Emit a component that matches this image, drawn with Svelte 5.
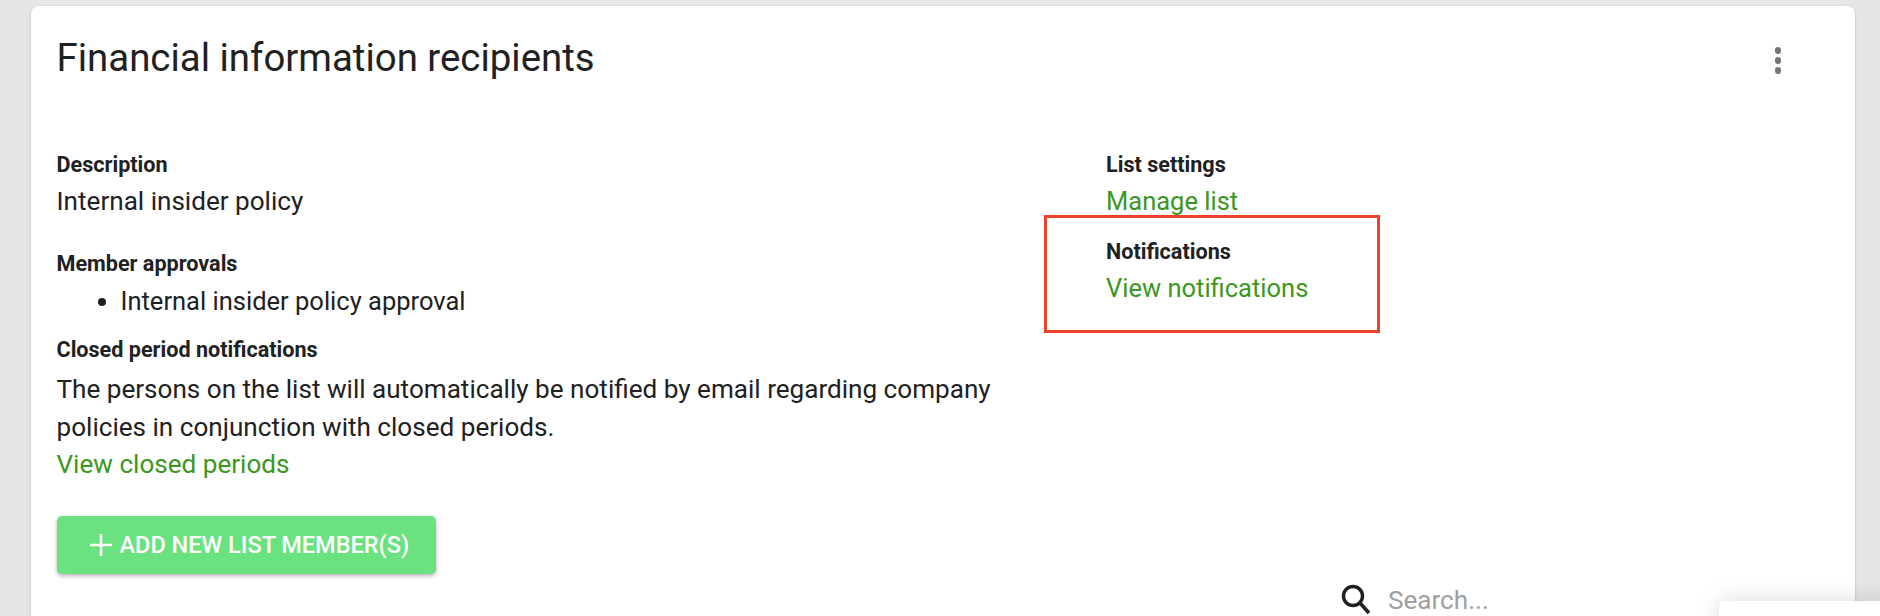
<script>
    const links = { manage: "Manage list", notifications: "View notifications", closed: "View closed periods" };
</script>

<div class="page">
    <div class="card">
        <div class="header">
            <h1>Financial information recipients</h1>
            <button class="more" aria-label="More">
                <span></span><span></span><span></span>
            </button>
        </div>

        <div class="columns">
            <div class="col left">
                <h4>Description</h4>
                <p>Internal insider policy</p>

                <h4 class="approvals">Member approvals</h4>
                <ul>
                    <li>Internal insider policy approval</li>
                </ul>

                <h4 class="closed">Closed period notifications</h4>
                <p>The persons on the list will automatically be notified by email regarding company policies in conjunction with closed periods.</p>
                <a href="#closed">{links.closed}</a>
            </div>

            <div class="col right">
                <h4>List settings</h4>
                <a href="#manage">{links.manage}</a>
                <h4 class="notif">Notifications</h4>
                <a href="#notifications">{links.notifications}</a>
            </div>
        </div>

        <div class="actions">
            <button class="add">
                <svg viewBox="0 0 24 24" width="24" height="24"><path d="M12 1v22M1 12h22" stroke="#fff" stroke-width="2.6" fill="none" /></svg>
                ADD NEW LIST MEMBER(S)
            </button>
            <div class="search">
                <svg viewBox="0 0 30 32" width="30" height="32"><circle cx="12" cy="12" r="9.5" stroke="#212121" stroke-width="3.4" fill="none" /><path d="M19 19l9 10" stroke="#212121" stroke-width="3.6" fill="none" /></svg>
                <span>Search...</span>
            </div>
        </div>
    </div>

    <div class="highlight"></div>
    <div class="popup"></div>
</div>

<style>
    :global(body){
        margin: 0;
        background-color: #e6e6e6;
    }

    .page{
        position: relative;
        height: 616px;
        overflow: hidden;
        font-family: Roboto, sans-serif;
        color: #212121;
    }

    .card{
        margin: 6px 25px 0 31px;
        height: 700px;
        padding: 29px 26px 0 25.5px;
        box-sizing: border-box;
        background-color: #fff;
        border-radius: 8px;
        box-shadow: 0 1px 3px rgba(0,0,0,0.2);
    }

    .header{
        display: flex;
        justify-content: space-between;
        align-items: flex-start;
    }

    h1{
        margin: 0;
        font-size: 38.4px;
        font-weight: 400;
        line-height: 46px;
    }

    .more{
        display: flex;
        flex-direction: column;
        gap: 3.5px;
        margin: 12px 48px 0 0;
        padding: 0;
        border: none;
        background: none;
    }

    .more span{
        width: 6.5px;
        height: 6.5px;
        border-radius: 50%;
        background-color: #757575;
    }

    .columns{
        display: flex;
        margin-top: 67.5px;
    }

    .left{
        width: 1049.5px;
    }

    .left p{
        width: 960px;
    }

    .left p, .left a{
        font-size: 26.1px;
    }

    h4{
        margin: 0 0 3px 0;
        font-size: 21.6px;
        font-weight: 700;
        line-height: 31px;
    }

    p{
        margin: 0;
        line-height: 37.5px;
    }

    a{
        display: block;
        font-size: 25.5px;
        line-height: 37.5px;
        color: #3c9720;
        text-decoration: none;
    }

    ul{
        margin: 0;
        padding-left: 64px;
        font-size: 25.5px;
        line-height: 37.5px;
    }

    .approvals{
        margin-top: 27.5px;
        margin-bottom: 4px;
    }

    .closed{
        margin-top: 14px;
        margin-bottom: 6px;
    }

    .notif{
        margin-top: 15.5px;
    }

    .actions{
        display: flex;
        justify-content: space-between;
        align-items: flex-start;
        margin-top: 32px;
    }

    .add{
        display: flex;
        align-items: center;
        gap: 7px;
        width: 379px;
        height: 58px;
        padding: 0 0 0 32px;
        box-sizing: border-box;
        border: none;
        border-radius: 5px;
        background-color: #6ae27f;
        color: #fff;
        font-family: inherit;
        font-size: 23.5px;
        font-weight: 500;
        white-space: nowrap;
        box-shadow: 0 2px 4px rgba(0,0,0,0.3);
    }

    .search{
        display: flex;
        align-items: center;
        gap: 17px;
        margin: 68px 107px 0 0;
        width: 381px;
        font-size: 26.1px;
        color: #a0a0a0;
    }

    .highlight{
        position: absolute;
        left: 1044px;
        top: 215px;
        width: 336px;
        height: 118px;
        box-sizing: border-box;
        border: 3px solid #ef4129;
    }

    .popup{
        position: absolute;
        left: 1719px;
        top: 601px;
        width: 200px;
        height: 100px;
        background-color: #fff;
        border-radius: 6px;
        box-shadow: 0 0 24px rgba(0,0,0,0.15);
    }
</style>
